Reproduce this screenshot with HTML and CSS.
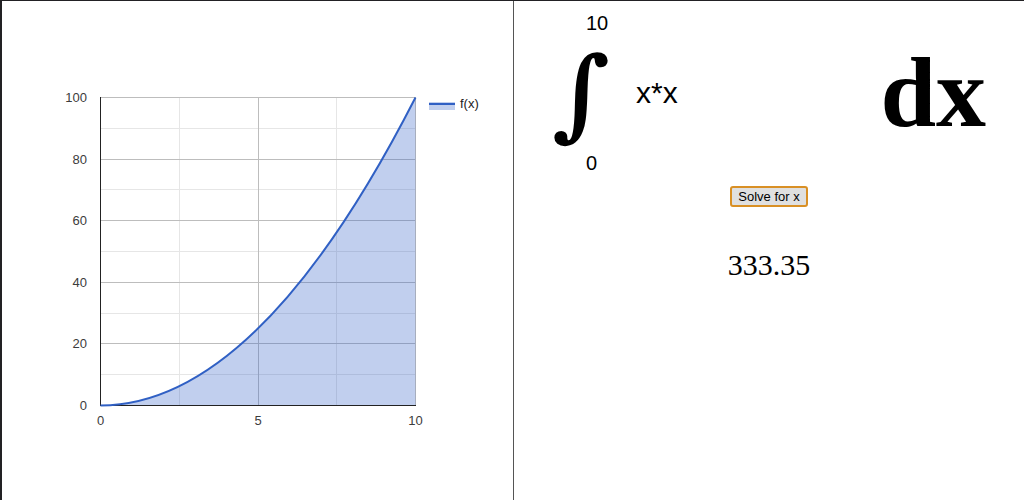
FILE: index.html
```html
<!DOCTYPE html>
<html lang="en">
<head>
<meta charset="utf-8">
<title>Integral solver</title>
<link rel="stylesheet" href="styles.css">
</head>
<body>
<main class="app">
  <section class="chart-panel">
    <svg class="chart" viewBox="2 1 511 499" role="img" aria-label="Area chart of f(x)">
      <path class="minor" d="M101 128.500H416M101 189.500H416M101 251.500H416M101 313.500H416M101 374.500H416M179.500 97V405M336.500 97V405"/>
      <path class="major" d="M101 97.500H416M101 159.500H416M101 220.500H416M101 282.500H416M101 343.500H416M258.500 97V405M415.500 97V405"/>
      <path class="area" d="M100.500 405.500Q258 405.500 415.500 97.500V405.500Z"/>
      <path class="axis" d="M100.500 97V406M100 405.500H416"/>
      <path class="curve" d="M100.500 405.500Q258 405.500 415.500 97.500"/>
      <g class="label y-label">
        <text x="87" y="102">100</text>
        <text x="87" y="164">80</text>
        <text x="87" y="225">60</text>
        <text x="87" y="287">40</text>
        <text x="87" y="348">20</text>
        <text x="87" y="410">0</text>
      </g>
      <g class="label x-label">
        <text x="100.500" y="425">0</text>
        <text x="258" y="425">5</text>
        <text x="415.500" y="425">10</text>
      </g>
      <rect class="area" x="429" y="102" width="26" height="8"/>
      <path class="curve" d="M429 104H455"/>
      <text class="label legend" x="460" y="108">f(x)</text>
    </svg>
  </section>
  <section class="solver">
    <div class="expression">
      <div class="bounds">
        <input class="bound" type="text" value="10" aria-label="Upper limit">
        <span class="integral">∫</span>
        <input class="bound" type="text" value="0" aria-label="Lower limit">
      </div>
      <input class="formula" type="text" value="x*x" aria-label="Function of x">
      <span class="dx">dx</span>
    </div>
    <button class="solve" type="button">Solve for x</button>
    <output class="result">333.35</output>
  </section>
</main>
</body>
</html>
```
FILE: styles.css
```css
* {
  box-sizing: border-box;
}

body {
  margin: 0;
  background: #fff;
  color: #000;
  font-family: "Liberation Serif", "Times New Roman", serif;
}

.app {
  display: grid;
  grid-template-columns: minmax(0, 1fr) minmax(0, 1fr);
  min-height: 100vh;
  border-top: 1px solid #222124;
  border-left: 2px solid #222124;
}

.chart-panel {
  overflow: hidden;
}

.chart {
  display: block;
  width: 100%;
}

.minor,
.major,
.axis,
.curve {
  fill: none;
  stroke-width: 1;
}

.minor {
  stroke: #e6e6e6;
}

.major {
  stroke: #bdbdbd;
}

.axis {
  stroke: #222;
}

.area {
  fill: #3360c6;
  fill-opacity: 0.3;
}

.curve {
  stroke: #3060c4;
  stroke-width: 2;
}

.label {
  fill: #3c3c3c;
  font-family: "Liberation Sans", Arial, sans-serif;
  font-size: 13px;
}

.y-label {
  text-anchor: end;
}

.x-label {
  text-anchor: middle;
}

.legend {
  fill: #222;
}

.solver {
  display: flex;
  flex-direction: column;
  align-items: center;
  border-left: 1px solid #555;
}

.expression {
  display: flex;
  align-items: center;
  width: 100%;
  padding: 8px 38px 0;
}

.bounds {
  display: flex;
  flex-direction: column;
  width: 84px;
}

.bound,
.formula {
  padding: 0;
  border: 0;
  outline: 0;
  background: transparent;
  color: #000;
  font-family: "Liberation Sans", Arial, sans-serif;
}

.bound {
  width: 36px;
  height: 28px;
  margin-left: 34px;
  font-size: 20px;
}

.integral,
.dx {
  font-size: 100px;
  font-weight: bold;
  line-height: 112px;
}

.integral {
  font-family: "DejaVu Serif", serif;
}

.formula {
  flex: 1;
  min-width: 0;
  height: 40px;
  font-size: 30px;
}

.solve {
  height: 21px;
  margin-top: 9px;
  padding: 0 6px;
  border: 2px solid #d99025;
  border-radius: 3px;
  background: #e0e0e0;
  color: #000;
  font-family: "Liberation Sans", Arial, sans-serif;
  font-size: 13px;
  line-height: 17px;
}

.result {
  margin-top: 40px;
  font-size: 30px;
  line-height: 36px;
}
```
